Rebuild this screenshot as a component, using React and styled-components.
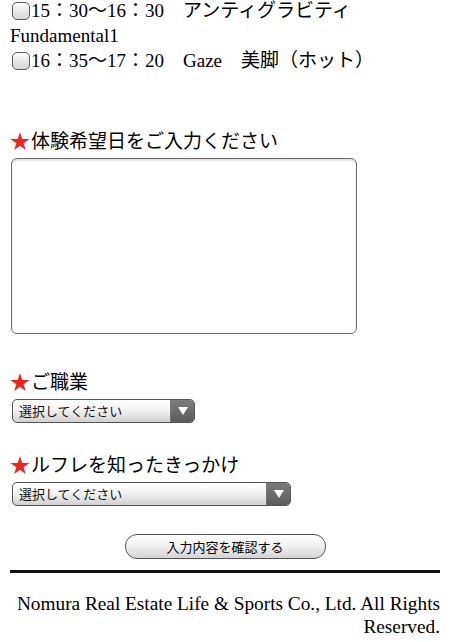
import React from 'react';
import styled, { createGlobalStyle } from 'styled-components';

const GlobalStyle = createGlobalStyle`
  html, body {
    margin: 0;
    padding: 0;
    background: #fff;
  }
  body {
    font-family: "Liberation Serif", "Noto Sans CJK JP", serif;
    color: #000;
    overflow: hidden;
  }
`;

const Page = styled.div`
  width: 450px;
  height: 642px;
  overflow: hidden;
  padding: 0 10px;
  box-sizing: border-box;
  font-size: 19px;
`;

const Scroller = styled.div`
  margin-top: -2px;
`;

const Lesson = styled.label`
  display: block;
  line-height: 25px;
`;

const Check = styled.span`
  display: inline-block;
  width: 18px;
  height: 18px;
  margin: 0 1px 0 2px;
  vertical-align: -3px;
  border: 1px solid #5a5a5a;
  border-radius: 5px;
  box-sizing: border-box;
  background: linear-gradient(#fdfdfd, #d6d6d6);
`;

const Section = styled.div`
  margin-top: ${p => p.gap}px;
`;

const Heading = styled.div`
  line-height: 24px;
  display: flex;
  align-items: center;
`;

const Star = styled.span`
  color: #e8261c;
  font-size: 20px;
  margin-right: 1px;
`;

const Area = styled.div`
  margin: 4px 0 0 1px;
  width: 346px;
  height: 176px;
  box-sizing: border-box;
  border: 1.5px solid #6f6f6f;
  border-radius: 6px;
  box-shadow: inset 0 2px 2px rgba(0, 0, 0, 0.12);
`;

const Select = styled.div`
  margin: 4px 0 0 2px;
  width: ${p => p.width}px;
  height: 24px;
  box-sizing: border-box;
  border: 1px solid #555;
  border-radius: 5px;
  display: flex;
  overflow: hidden;
  background: linear-gradient(#ffffff, #f3f3f3 45%, #d0d0d0);
  font-family: "Noto Sans CJK JP", "DejaVu Sans", sans-serif;
  font-size: 13px;
`;

const SelectText = styled.span`
  flex: 1;
  padding-left: 6px;
  line-height: 22px;
  color: #111;
`;

const Arrow = styled.span`
  width: 23px;
  display: flex;
  align-items: center;
  justify-content: center;
  border-left: 1px solid #777;
  background: linear-gradient(#7c7c7c, #5c5c5c);
`;

const Submit = styled.div`
  margin: 28px auto 0;
  width: 201px;
  height: 25px;
  box-sizing: border-box;
  border: 1px solid #555;
  border-radius: 12px;
  background: linear-gradient(#ffffff, #f0f0f0 50%, #d4d4d4);
  text-align: center;
  line-height: 23px;
  font-family: "Noto Sans CJK JP", "DejaVu Sans", sans-serif;
  font-size: 13px;
`;

const Rule = styled.div`
  margin-top: 11px;
  height: 3px;
  background: #111;
`;

const Footer = styled.p`
  margin: 19px 0 0;
  text-align: right;
  line-height: 23px;
  font-size: 19.3px;
`;

const Tri = () => (
  <svg width="10" height="8" viewBox="0 0 10 8">
    <path d="M0 0 H10 L5 8 Z" fill="#fff" />
  </svg>
);

const Dropdown = ({ width }) => (
  <Select width={width}>
    <SelectText>選択してください</SelectText>
    <Arrow><Tri /></Arrow>
  </Select>
);

export default function App() {
  return (
    <Page>
      <GlobalStyle />
      <Scroller>
        <Lesson><Check />15：30〜16：30　アンティグラビティ Fundamental1</Lesson>
        <Lesson><Check />16：35〜17：20　Gaze　美脚（ホット）</Lesson>

        <Section gap={57}>
          <Heading><Star>★</Star>体験希望日をご入力ください</Heading>
          <Area />
        </Section>

        <Section gap={37}>
          <Heading><Star>★</Star>ご職業</Heading>
          <Dropdown width={183} />
        </Section>

        <Section gap={31}>
          <Heading><Star>★</Star>ルフレを知ったきっかけ</Heading>
          <Dropdown width={279} />
        </Section>

        <Submit>入力内容を確認する</Submit>
        <Rule />
        <Footer>Nomura Real Estate Life &amp; Sports Co., Ltd. All Rights Reserved.</Footer>
      </Scroller>
    </Page>
  );
}
